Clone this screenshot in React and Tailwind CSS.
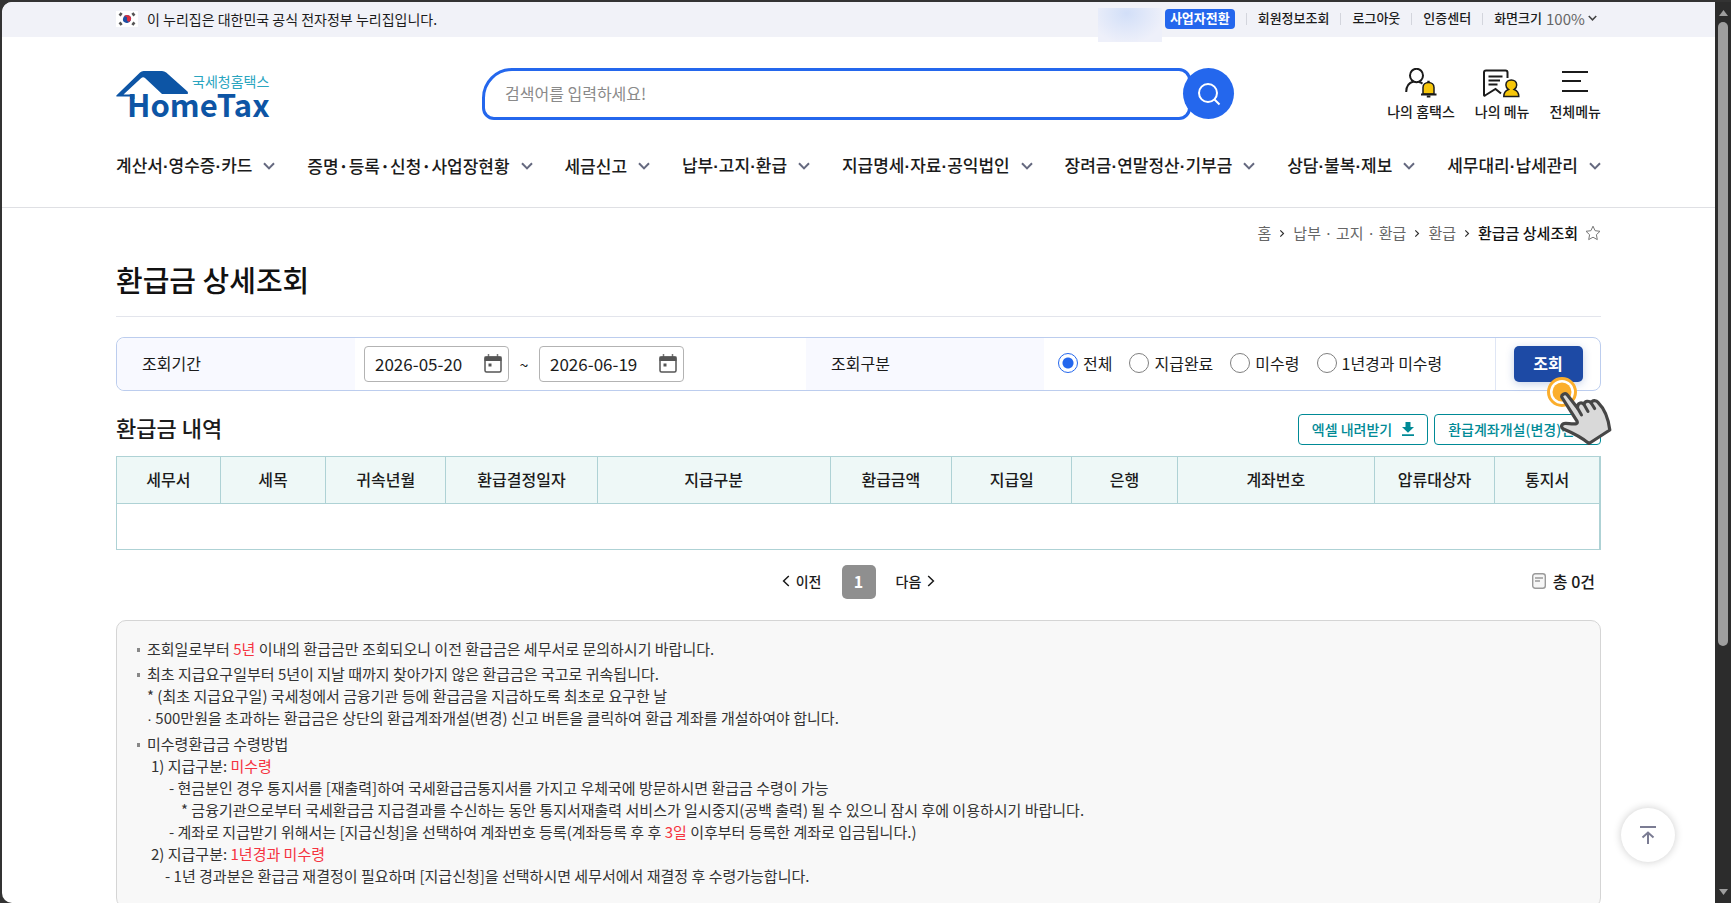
import { Fragment, useState } from "react";

const utilLinks = ["회원정보조회", "로그아웃", "인증센터"];

const menus = [
  { items: ["계산서", "영수증", "카드"] },
  { items: ["증명", "등록", "신청", "사업장현황"], wide: true },
  { items: ["세금신고"] },
  { items: ["납부", "고지", "환급"] },
  { items: ["지급명세", "자료", "공익법인"] },
  { items: ["장려금", "연말정산", "기부금"] },
  { items: ["상담", "불복", "제보"] },
  { items: ["세무대리", "납세관리"] },
];

const payTypes = ["전체", "지급완료", "미수령", "1년경과 미수령"];

const columns = [
  { label: "세무서", width: "w-[7%]" },
  { label: "세목", width: "w-[7.1%]" },
  { label: "귀속년월", width: "w-[8.1%]" },
  { label: "환급결정일자", width: "w-[10.2%]" },
  { label: "지급구분", width: "w-[15.7%]" },
  { label: "환급금액", width: "w-[8.2%]" },
  { label: "지급일", width: "w-[8.1%]" },
  { label: "은행", width: "w-[7.1%]" },
  { label: "계좌번호", width: "w-[13.3%]" },
  { label: "압류대상자", width: "w-[8.1%]" },
  { label: "통지서", width: "w-[7.1%]" },
];

const Red = ({ children }) => <span className="text-[#f5333f]">{children}</span>;

const Chevron = ({ className, strokeWidth = 2 }) => (
  <svg viewBox="0 0 12 8" fill="none" stroke="currentColor" strokeWidth={strokeWidth} className={className}>
    <path d="M1 1.2 6 6.4l5-5.2" />
  </svg>
);

const KoreaFlag = () => (
  <svg viewBox="0 0 22 16" className="h-4 w-[22px]">
    <rect width="22" height="16" fill="#fff" />
    <g transform="rotate(20 11 8)">
      <circle cx="11" cy="8" r="4" fill="#1f4fa3" />
      <path d="M7 8a4 4 0 0 1 8 0 2 2 0 0 1-4 0 2 2 0 0 0-4 0z" fill="#d8303f" />
    </g>
    <g stroke="#555" strokeWidth="2.6">
      <path d="m3.6 4.6 2-2.6M16.4 2l2 2.6M3.6 11.4l2 2.6M16.4 14l2-2.6" />
    </g>
  </svg>
);

const Logo = () => (
  <svg viewBox="0 0 154 48" className="h-12 w-[154px] overflow-visible" role="img" aria-label="국세청홈택스 HomeTax">
    <path
      d="M.6 24.200 24 1.6Q25.500 0 27.600 0H46q2.400 0 4.200 1.600L71.500 20.400q1.500 2.600-1.200 2.600H46L29 7q-2-1.500-4 .2L7.500 23.400H18.500V28H14v-2.500H1.500Q-.5 25.500.6 24.200z"
      fill="#0d55a5"
    />
    <text x="76" y="16" fontSize="14" fill="#2aa5bf" className="font-['Noto_Sans_CJK_KR',sans-serif]">
      국세청홈택스
    </text>
    <text x="11" y="46" fontSize="31" fill="#0d55a5" className="font-['Noto_Sans_CJK_KR',sans-serif] font-bold">
      HomeTax
    </text>
  </svg>
);

const MyHometaxIcon = () => (
  <svg viewBox="0 0 32 30" fill="none" stroke="#1b1b1b" strokeWidth="2" className="h-[30px] w-8">
    <ellipse cx="11.500" cy="7.500" rx="6.500" ry="6.700" />
    <path d="M1.200 24c0-6 3.200-9.500 7.300-10.500M14 14c1.500.3 2.500.8 3.500 1.600" />
    <path d="M18 26v-6.500c0-3 2.400-5 5.500-5s5.500 2 5.500 5V26z" fill="#f6c60a" strokeWidth="1.500" />
    <path d="M16 26.500h15.500" />
    <path d="M22.300 13.800h2.400M21.800 28.600h3.600" strokeWidth="2" />
  </svg>
);

const MyMenuIcon = () => (
  <svg viewBox="0 0 38 30" fill="none" stroke="#1b1b1b" strokeWidth="2" className="h-[30px] w-[38px]">
    <path d="M24.500 10V4.500q0-2-2-2H3q-2 0-2 2V27q0 1 1 .5L12.500 21l5.500 4.500" />
    <path d="M5.500 8.500h14M5.500 12.500h11.500M5.500 16.500h9" strokeWidth="1.800" />
    <path
      d="M20.800 28.500c0-4 2-6 4.600-7-1.600-1-2.500-2.500-2.500-4.500 0-3 2.300-5 5.400-5s5.400 2 5.400 5c0 2-.9 3.500-2.500 4.500 2.600 1 4.600 3 4.600 7z"
      fill="#f6c60a"
      strokeWidth="1.500"
    />
  </svg>
);

const AllMenuIcon = () => (
  <svg viewBox="0 0 26 30" stroke="#1b1b1b" strokeWidth="2" className="h-[30px] w-[26px]">
    <path d="M0 4h26M0 13h19M0 23h26" />
  </svg>
);

const CalendarIcon = () => (
  <svg viewBox="0 0 18 19" className="h-[19px] w-[18px]">
    <path d="M4.500 0v4M13.500 0v4" stroke="#777" strokeWidth="1.500" />
    <rect x="1" y="3" width="16" height="15" rx="1.500" fill="#fff" stroke="#555" strokeWidth="1.500" />
    <path d="M.5 2.500h17V7H.5z" fill="#555" />
    <path d="M4.500 9.500h3v3h-3z" fill="#555" />
  </svg>
);

const HandPointer = () => (
  <svg viewBox="0 0 66 68" className="pointer-events-none absolute top-[39px] left-[50px] z-10 h-[68px] w-[66px]">
    <circle cx="16" cy="15" r="13.500" fill="#fff" stroke="#fbae2c" strokeWidth="3" />
    <circle cx="16" cy="15" r="9.500" fill="#fbae2c" />
    <path
      d="M16 20.500c-1.200-2.600 3.200-5.400 5.400-2.600L31.500 31c-.3-5.500 4-6 6.500-3.600.4-3.800 5-4 7.200-1.400 1-3 5-3 7-.4 6 5.900 10 14.400 11.600 27.400L43 66.500C37 61.500 27 56 17.500 52c-3.500-2-2-5.800 2.500-5.600 4 .2 8 .8 10.500.2 1.300-.6.8-2 .2-3z"
      fill="#d9d9d9"
      stroke="#464646"
      strokeWidth="3.200"
      strokeLinejoin="round"
    />
    <path d="m31.500 31 4 7M38 27.400l4 7M45.200 26l3.500 5.600" stroke="#464646" strokeWidth="3" strokeLinecap="round" />
  </svg>
);

const DateField = ({ label, defaultValue }) => (
  <div className="flex h-9 w-[145px] items-center justify-between rounded border border-[#b3b3b3] bg-white pr-1.5 pl-2.5">
    <input type="text" aria-label={label} defaultValue={defaultValue} className="w-[100px] text-[17px] outline-none" />
    <button type="button" aria-label={`${label} 달력`}>
      <CalendarIcon />
    </button>
  </div>
);

function TopBar() {
  return (
    <div className="bg-[#f1f2f8] px-[114px]">
      <div className="flex h-[35px] items-center justify-between pb-0.5 text-sm">
        <p className="flex items-center gap-[9px]">
          <KoreaFlag />이 누리집은 대한민국 공식 전자정부 누리집입니다.
        </p>
        <div className="flex items-center">
          <div className="relative mr-[3px] h-[35px] w-16">
            <div className="absolute inset-x-0 top-[7px] h-[34px] bg-[radial-gradient(ellipse_at_45%_15%,#d2dff8,#eef0fa_75%)]" />
          </div>
          <a href="#switch" className="flex h-5 items-center rounded bg-[#2467ed] px-[5px] text-[13px] font-bold text-white">
            사업자전환
          </a>
          {utilLinks.map((link) => (
            <a key={link} href="#util" className="flex items-center text-[13px] font-medium">
              <span className="mx-[11px] h-3 w-px bg-[#d3d5dd]" />
              {link}
            </a>
          ))}
          <span className="mx-[11px] h-3 w-px bg-[#d3d5dd]" />
          <label htmlFor="zoom" className="text-[13px] font-medium">
            화면크기
          </label>
          <span className="relative ml-1 flex items-center">
            <select id="zoom" className="appearance-none bg-transparent pr-4 text-[15px] text-[#666]">
              <option>100%</option>
            </select>
            <Chevron className="pointer-events-none absolute right-1 h-1.5 w-[9px] text-[#444]" />
          </span>
        </div>
      </div>
    </div>
  );
}

function Header() {
  return (
    <header className="border-b border-[#dfe0e4] px-[114px] pt-[31px]">
      <div className="flex items-start">
        <a href="#home" className="mt-[3px]">
          <Logo />
        </a>
        <form className="mr-[153px] ml-[212px] flex flex-1 items-start" onSubmit={(e) => e.preventDefault()}>
          <input
            type="search"
            aria-label="검색어"
            placeholder="검색어를 입력하세요!"
            className="h-[52px] min-w-0 flex-1 rounded-xl rounded-tl-[30px] border-3 border-[#2467ed] px-5 pb-0.5 text-base outline-none placeholder:text-[#8a8a8a]"
          />
          <button
            type="submit"
            aria-label="검색"
            className="relative -ml-2 flex size-[51px] items-center justify-center rounded-full bg-[#2467ed]"
          >
            <svg viewBox="0 0 24 24" fill="none" stroke="#fff" strokeWidth="2" className="size-6">
              <circle cx="11" cy="11" r="9" />
              <path d="m17.500 17.500 5 5" />
            </svg>
          </button>
        </form>
        <div className="flex gap-5 text-sm font-medium">
          <a href="#my" className="flex flex-col items-center gap-[3px]">
            <MyHometaxIcon />나의 홈택스
          </a>
          <a href="#mymenu" className="flex flex-col items-center gap-[3px]">
            <MyMenuIcon />나의 메뉴
          </a>
          <a href="#all" className="flex flex-col items-center gap-[3px]">
            <AllMenuIcon />전체메뉴
          </a>
        </div>
      </div>
      <nav className="mt-[30px] mb-[26px] flex justify-between">
        {menus.map(({ items, wide }) => (
          <a key={items[0]} href="#menu" className="flex items-center gap-[11px] text-[17px] leading-7 font-medium">
            <span>
              {items.map((item, i) => (
                <Fragment key={item}>
                  {i > 0 && <span className={wide ? "font-bold" : "font-['Liberation_Sans',sans-serif] font-bold"}>·</span>}
                  {item}
                </Fragment>
              ))}
            </span>
            <Chevron className="h-2 w-3 text-[#666a80]" />
          </a>
        ))}
      </nav>
    </header>
  );
}

function SearchFilter() {
  const [payType, setPayType] = useState("전체");

  return (
    <form
      className="mt-5 grid h-[54px] grid-cols-[238px_1fr_238px_1fr_105px] rounded-lg border border-[#bccdee] text-base"
      onSubmit={(e) => e.preventDefault()}
    >
      <div className="flex items-center rounded-l-lg bg-[#f8f9ff] pb-0.5 pl-[25px]">조회기간</div>
      <div className="flex items-center gap-[9px] pb-px pl-[9px]">
        <DateField label="시작일" defaultValue="2026-05-20" />
        <span className="w-3 text-center">~</span>
        <DateField label="종료일" defaultValue="2026-06-19" />
      </div>
      <div className="flex items-center bg-[#f8f9ff] pb-0.5 pl-[25px]">조회구분</div>
      <fieldset className="flex items-center gap-[17px] pb-0.5 pl-3.5">
        {payTypes.map((type) => (
          <label key={type} className="flex items-center gap-[5px]">
            <input
              type="radio"
              name="payType"
              checked={payType === type}
              onChange={() => setPayType(type)}
              className="size-5 appearance-none rounded-full border border-[#808080] bg-white checked:border-[#2467ed] checked:bg-[radial-gradient(circle,#2467ed_5px,#fff_6px)]"
            />
            {type}
          </label>
        ))}
      </fieldset>
      <div className="relative flex items-center justify-center border-l border-[#dfe6f5]">
        <button
          type="submit"
          className="h-9 w-[69px] rounded-[5px] bg-[#1d4aa5] pb-0.5 font-bold text-white shadow-[0_2px_8px_#1d4aa540]"
        >
          조회
        </button>
        <HandPointer />
      </div>
    </form>
  );
}

function RefundTable() {
  return (
    <section>
      <div className="mt-[23px] flex items-start justify-between">
        <h2 className="text-[22px] leading-[26px] font-medium">환급금 내역</h2>
        <div className="flex gap-1.5 text-sm font-medium text-[#008a96]">
          <button
            type="button"
            className="flex h-[31px] items-center gap-2.5 rounded border border-[#008a96] px-[13px] pb-0.5"
          >
            엑셀 내려받기
            <svg viewBox="0 0 12 14" fill="currentColor" className="h-3.5 w-3">
              <path d="M3.500 0h5v5H12L6 10.800 0 5h3.500zM0 12.200h12V14H0z" />
            </svg>
          </button>
          <button type="button" className="h-[31px] rounded border border-[#008a96] px-[13px] pb-0.5">
            환급계좌개설(변경)신고
          </button>
        </div>
      </div>
      <table className="mt-[11px] w-full table-fixed border-collapse border border-r-2 border-[#aed2d5] text-base">
        <thead>
          <tr className="h-[47px] bg-[#eef8f7]">
            {columns.map((col) => (
              <th key={col.label} className={`${col.width} border border-[#aed2d5] pb-0.5 font-medium`}>
                {col.label}
              </th>
            ))}
          </tr>
        </thead>
        <tbody>
          <tr className="h-[46px]">
            <td colSpan={columns.length} />
          </tr>
        </tbody>
      </table>
      <div className="mt-[15px] grid grid-cols-[1fr_auto_1fr] items-center text-sm font-medium">
        <button type="button" className="mr-5 flex items-center gap-1 justify-self-end pb-0.5">
          <Chevron strokeWidth={1.5} className="h-2 w-3 rotate-90" />
          이전
        </button>
        <button type="button" className="size-[34px] rounded-[5px] bg-[#8f8f8f] pb-0.5 text-base font-bold text-white">
          1
        </button>
        <div className="flex items-center justify-between pb-0.5 pl-5">
          <button type="button" className="flex items-center gap-1">
            다음
            <Chevron strokeWidth={1.5} className="h-2 w-3 -rotate-90" />
          </button>
          <p className="flex items-center gap-[7px] pr-1.5 text-base">
            <svg viewBox="0 0 14 16" fill="none" stroke="#9a9a9a" className="h-4 w-3.5">
              <rect x=".7" y=".7" width="12.600" height="14.600" rx="2.500" fill="#f6f6f6" strokeWidth="1.400" />
              <path d="M3 5h8M3 8h5" strokeWidth="1.500" />
            </svg>
            총 0건
          </p>
        </div>
      </div>
    </section>
  );
}

function Notes() {
  return (
    <ul className="mt-[21px] flex flex-col gap-[3px] rounded-[10px] border border-[#d5d5d5] bg-[#f8f8f8] px-5 pt-[17px] pb-5 text-[15px] leading-[22px] text-[#333]">
      <li className="flex gap-[7px]">
        <span className="mt-[10px] h-1 w-[3px] bg-[#888]" />
        <p>
          조회일로부터 <Red>5년</Red> 이내의 환급금만 조회되오니 이전 환급금은 세무서로 문의하시기 바랍니다.
        </p>
      </li>
      <li className="flex gap-[7px]">
        <span className="mt-[10px] h-1 w-[3px] bg-[#888]" />
        <div>
          <p>최초 지급요구일부터 5년이 지날 때까지 찾아가지 않은 환급금은 국고로 귀속됩니다.</p>
          <p>* (최초 지급요구일) 국세청에서 금융기관 등에 환급금을 지급하도록 최초로 요구한 날</p>
          <p>
            <span className="font-['Liberation_Sans',sans-serif]">·</span> 500만원을 초과하는 환급금은 상단의
            환급계좌개설(변경) 신고 버튼을 클릭하여 환급 계좌를 개설하여야 합니다.
          </p>
        </div>
      </li>
      <li className="flex gap-[7px]">
        <span className="mt-[10px] h-1 w-[3px] bg-[#888]" />
        <div>
          <p>미수령환급금 수령방법</p>
          <div className="pl-1">
            <p>
              1) 지급구분: <Red>미수령</Red>
            </p>
            <div className="pl-[18px]">
              <p>- 현금분인 경우 통지서를 [재출력]하여 국세환급금통지서를 가지고 우체국에 방문하시면 환급금 수령이 가능</p>
              <p className="pl-3">
                * 금융기관으로부터 국세환급금 지급결과를 수신하는 동안 통지서재출력 서비스가 일시중지(공백 출력) 될 수
                있으니 잠시 후에 이용하시기 바랍니다.
              </p>
              <p>
                - 계좌로 지급받기 위해서는 [지급신청]을 선택하여 계좌번호 등록(계좌등록 후 후 <Red>3일</Red> 이후부터
                등록한 계좌로 입금됩니다.)
              </p>
            </div>
            <p>
              2) 지급구분: <Red>1년경과 미수령</Red>
            </p>
            <p className="pl-3.5">
              - 1년 경과분은 환급금 재결정이 필요하며 [지급신청]을 선택하시면 세무서에서 재결정 후 수령가능합니다.
            </p>
          </div>
        </div>
      </li>
    </ul>
  );
}

function ScrollBar() {
  return (
    <div className="flex w-4 flex-col items-center bg-[#2c2c2c] py-2" aria-hidden="true">
      <svg viewBox="0 0 9 6" fill="#9e9e9e" className="h-1.5 w-[9px]">
        <path d="M4.500 0 9 6H0z" />
      </svg>
      <div className="mt-1.5 h-[70.5%] w-2.5 rounded-full bg-[#9e9e9e]" />
      <svg viewBox="0 0 9 6" fill="#9e9e9e" className="mt-auto h-1.5 w-[9px]">
        <path d="M0 0h9L4.500 6z" />
      </svg>
    </div>
  );
}

export default function App() {
  return (
    <div className="h-screen overflow-hidden bg-[#333] pt-0.5 pl-0.5 font-['Noto_Sans_CJK_KR',sans-serif] text-[#1b1b1b]">
      <div className="flex h-full overflow-hidden rounded-l-[10px] bg-white">
        <div className="relative min-w-0 flex-1 overflow-hidden">
          <TopBar />
          <Header />
          <main className="px-[114px]">
            <div className="mt-[15px] flex items-center justify-end gap-[7px] text-[15px] leading-5 text-[#666]">
              <a href="#home">홈</a>
              <Chevron className="h-[5px] w-2 -rotate-90 text-[#333]" />
              <a href="#pay">납부 · 고지 · 환급</a>
              <Chevron className="h-[5px] w-2 -rotate-90 text-[#333]" />
              <a href="#refund">환급</a>
              <Chevron className="h-[5px] w-2 -rotate-90 text-[#333]" />
              <span className="font-medium text-[#111]">환급금 상세조회</span>
              <button type="button" aria-label="즐겨찾기">
                <svg viewBox="0 0 16 16" fill="none" stroke="#777" strokeLinejoin="round" className="size-4">
                  <path d="m8 1.200 2.100 4.500 4.900.6-3.600 3.400.9 4.900L8 12.200l-4.300 2.400.9-4.900L1 6.300l4.900-.6z" />
                </svg>
              </button>
            </div>
            <h1 className="mt-4 border-b border-[#e3e5ec] pb-[17px] text-[29px] leading-10 font-medium text-[#111]">
              환급금 상세조회
            </h1>
            <SearchFilter />
            <RefundTable />
            <Notes />
          </main>
          <button
            type="button"
            aria-label="맨 위로"
            className="absolute right-10 bottom-[41px] flex size-[54px] items-center justify-center rounded-full bg-white shadow-[0_0_8px_#00000033]"
          >
            <svg viewBox="0 0 18 20" fill="none" stroke="#7b7c93" strokeWidth="2" className="h-5 w-[18px]">
              <path d="M1 2h16M9 19V8M3.500 12.500 9 7.500l5.500 5" />
            </svg>
          </button>
        </div>
        <ScrollBar />
      </div>
    </div>
  );
}
